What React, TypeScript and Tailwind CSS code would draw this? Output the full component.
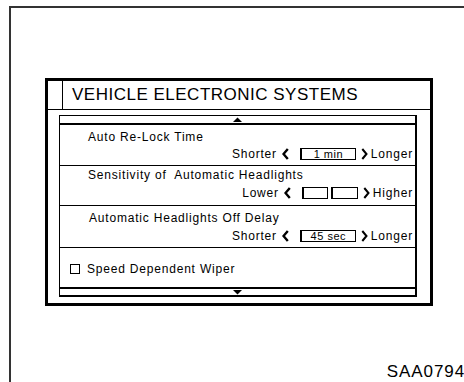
import React from "react";

const font = { fontFamily: '"Liberation Sans", Arial, sans-serif' };

function ChevL() {
  return (
    <svg width="7" height="12" viewBox="0 0 7 12" className="block">
      <polyline points="5.8,1 1.5,6 5.8,11" fill="none" stroke="#000" strokeWidth="2.4" strokeLinejoin="miter" />
    </svg>
  );
}

function ChevR() {
  return (
    <svg width="7" height="12" viewBox="0 0 7 12" className="block">
      <polyline points="1.3,1 5.5,6 1.3,11" fill="none" stroke="#000" strokeWidth="2" strokeLinejoin="miter" />
    </svg>
  );
}

function ValueLine({ left, right, children }: { left: string; right: string; children: React.ReactNode }) {
  return (
    <div className="flex h-[14px] items-center justify-end pr-[2px] text-[12px] leading-[14px] tracking-[0.8px] text-black">
      <span>{left}</span>
      <span className="ml-[5px] mr-[11px]"><ChevL /></span>
      {children}
      <span className="ml-[5px] mr-[3px]"><ChevR /></span>
      <span>{right}</span>
    </div>
  );
}

function Box({ w, text }: { w: string; text?: string }) {
  return (
    <div className={`flex h-[12px] items-center justify-center border border-l-2 border-black text-[11px] leading-[11px] tracking-[0.5px] ${w}`}>
      {text}
    </div>
  );
}

export default function App() {
  return (
    <div className="relative h-[382px] w-[464px] overflow-hidden bg-white" style={font}>
      <div className="ml-[9px] mt-[6px] flex h-[380px] w-[460px] flex-col border-l-2 border-t-2 border-[#333]">
        <div className="ml-[34px] mt-[70px] flex h-[228px] w-[388px] flex-col border-[3px] border-black">
          <div className="flex h-[29px] shrink-0 border-b border-black">
            <div className="w-[15px] border-r border-black" />
            <div className="flex items-center pl-[9px] text-[17px] leading-[20px] tracking-[0.5px] text-black">
              VEHICLE ELECTRONIC SYSTEMS
            </div>
          </div>
          <div className="ml-[11px] mt-[5px] flex h-[182px] w-[358px] flex-col border border-b-2 border-r-2 border-black">
            <div className="flex h-[9px] shrink-0 justify-center border-b-2 border-black pt-[1px]">
              <svg width="9" height="5" viewBox="0 0 9 5" className="block">
                <polygon points="0,5 4.5,0.5 9,5" fill="#000" />
              </svg>
            </div>
            <div className="h-[41px] shrink-0 border-b border-black pt-[5px]">
              <div className="pl-[28px] text-[12px] leading-[14px] tracking-[0.8px]">Auto Re-Lock Time</div>
              <div className="mt-[3px]">
                <ValueLine left="Shorter" right="Longer">
                  <Box w="w-[56px]" text="1 min" />
                </ValueLine>
              </div>
            </div>
            <div className="h-[40px] shrink-0 border-b border-black pt-[2px]">
              <div className="pl-[28px] text-[12px] leading-[14px] tracking-[0.8px]">Sensitivity of&nbsp; Automatic Headlights</div>
              <div className="mt-[4px]">
                <ValueLine left="Lower" right="Higher">
                  <div className="flex gap-[3px]">
                    <Box w="w-[26px]" />
                    <Box w="w-[27px]" />
                  </div>
                </ValueLine>
              </div>
            </div>
            <div className="h-[42px] shrink-0 border-b border-black pt-[5px]">
              <div className="pl-[29px] text-[12px] leading-[14px] tracking-[0.8px]">Automatic Headlights Off Delay</div>
              <div className="mt-[4px]">
                <ValueLine left="Shorter" right="Longer">
                  <Box w="w-[56px]" text="45 sec" />
                </ValueLine>
              </div>
            </div>
            <div className="flex h-[39px] shrink-0 items-start pl-[10px] pt-[14px]">
              <div className="mt-[2px] h-[10px] w-[10px] border border-black" />
              <div className="ml-[7px] text-[12px] leading-[14px] tracking-[0.8px]">Speed Dependent Wiper</div>
            </div>
            <div className="flex h-[9px] shrink-0 justify-center border-t-2 border-black pt-[1px]">
              <svg width="9" height="5" viewBox="0 0 9 5" className="block">
                <polygon points="0,0 9,0 4.5,4.5" fill="#000" />
              </svg>
            </div>
          </div>
        </div>
        <div className="mt-[56px] flex justify-end pr-[4px]">
          <span className="text-[17px] leading-[20px] tracking-[0.9px] text-black">SAA0794</span>
        </div>
      </div>
    </div>
  );
}
